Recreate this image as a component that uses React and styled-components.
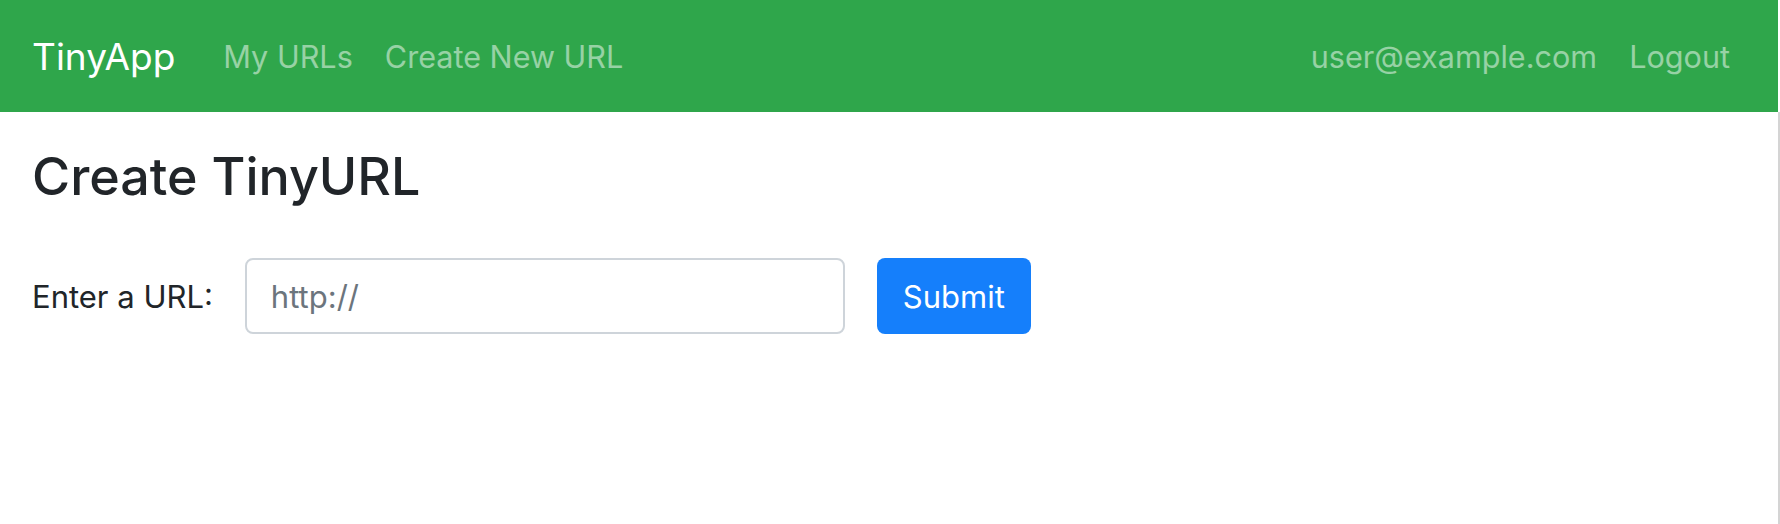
import React from 'react';
import styled, { createGlobalStyle } from 'styled-components';

const GlobalStyle = createGlobalStyle`
  html, body {
    margin: 0;
    padding: 0;
    background: #fff;
  }
  body {
    font-family: Inter, "Liberation Sans", sans-serif;
    color: #212529;
  }
  * {
    box-sizing: border-box;
  }
`;

const Page = styled.div`
  width: 1780px;
  min-height: 100vh;
  display: flex;
  flex-direction: column;
`;

const Navbar = styled.nav`
  height: 112px;
  margin-right: 2px;
  padding: 0 32px;
  background: #2fa64b;
  display: flex;
  align-items: center;
`;

const Brand = styled.a`
  font-size: 37px;
  color: #fff;
  text-decoration: none;
  margin-right: 32px;
`;

const NavList = styled.div`
  display: flex;
  align-items: center;
  margin-left: ${({ $right }) => ($right ? 'auto' : '0')};
`;

const NavLink = styled.a`
  font-size: 30.6px;
  color: rgba(255, 255, 255, 0.5);
  text-decoration: none;
  padding: 0 16px;
`;

const Main = styled.main`
  flex: 1;
  padding: 0 32px;
  border-right: 2px solid #d4d4d4;
`;

const Heading = styled.h3`
  font-size: 52px;
  font-weight: 500;
  line-height: 1.2;
  margin: 34px 0 50px;
`;

const Form = styled.form`
  display: flex;
  align-items: center;
`;

const Label = styled.label`
  font-size: 31px;
  margin-right: 32px;
`;

const Input = styled.input`
  width: 600px;
  height: 76px;
  padding: 0 24px;
  margin-right: 32px;
  border: 2px solid #ced4da;
  border-radius: 8px;
  font-family: inherit;
  font-size: 31px;
  color: #495057;

  &::placeholder {
    color: #6c757d;
  }
`;

const Button = styled.button`
  height: 76px;
  padding: 0 26px;
  border: none;
  border-radius: 8px;
  background: #157ffb;
  color: #fff;
  font-family: inherit;
  font-size: 31px;
`;

export default function App() {
  return (
    <Page>
      <GlobalStyle />
      <Navbar>
        <Brand href="#">TinyApp</Brand>
        <NavList>
          <NavLink href="#">My URLs</NavLink>
          <NavLink href="#">Create New URL</NavLink>
        </NavList>
        <NavList $right>
          <NavLink href="#">user@example.com</NavLink>
          <NavLink href="#">Logout</NavLink>
        </NavList>
      </Navbar>
      <Main>
        <Heading>Create TinyURL</Heading>
        <Form onSubmit={(e) => e.preventDefault()}>
          <Label htmlFor="longURL">Enter a URL:</Label>
          <Input id="longURL" type="text" placeholder="http://" />
          <Button type="submit">Submit</Button>
        </Form>
      </Main>
    </Page>
  );
}
